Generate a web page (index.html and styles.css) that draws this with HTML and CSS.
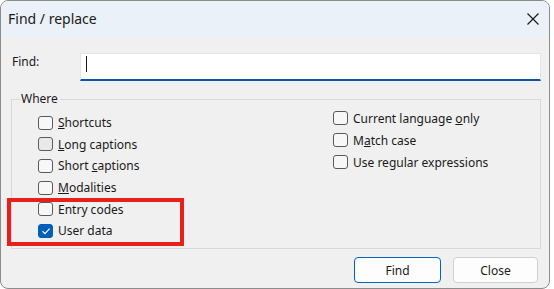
FILE: index.html
```html
<!DOCTYPE html>
<html>
<head>
<meta charset="utf-8">
<title>Find / replace</title>
<link rel="stylesheet" href="styles.css">
</head>
<body>
<div class="dialog">
  <div class="titlebar">
    <span class="title">Find / replace</span>
    <svg class="close" width="14" height="14" viewBox="0 0 14 14"><path d="M1.5 1.5L12.5 12.5M12.5 1.5L1.5 12.5"/></svg>
  </div>
  <div class="find-row">
    <label class="find-label">Find:</label>
    <div class="input"><span class="caret"></span></div>
  </div>
  <fieldset class="where">
    <legend>Where</legend>
    <div class="cols">
      <div class="col col-left">
        <div class="opt"><span class="box"></span><span><u>S</u>hortcuts</span></div>
        <div class="opt"><span class="box hover"></span><span><u>L</u>ong captions</span></div>
        <div class="opt"><span class="box"></span><span>Short <u>c</u>aptions</span></div>
        <div class="opt"><span class="box"></span><span><u>M</u>odalities</span></div>
        <div class="opt"><span class="box"></span><span>Entry codes</span></div>
        <div class="opt"><span class="box checked"><svg width="12" height="12" viewBox="0 0 12 12"><path d="M2.5 6.2L5 8.6L9.6 3.6"/></svg></span><span>User data</span></div>
      </div>
      <div class="col col-right">
        <div class="opt r"><span class="box"></span><span>Current language <u>o</u>nly</span></div>
        <div class="opt r"><span class="box"></span><span>M<u>a</u>tch case</span></div>
        <div class="opt r"><span class="box"></span><span>Use regular expressions</span></div>
      </div>
    </div>
  </fieldset>
  <div class="buttons">
    <button class="btn primary">Find</button>
    <button class="btn">Close</button>
  </div>
  <div class="highlight"></div>
</div>
</body>
</html>
```
FILE: styles.css
```css
html, body {
  margin: 0;
  padding: 0;
  background: #ffffff;
}
body {
  font-family: "Noto Sans", "Open Sans", sans-serif;
  font-size: 12px;
  color: #1a1a1a;
}
.dialog {
  position: relative;
  box-sizing: border-box;
  width: 550px;
  height: 289px;
  border: 1px solid #8c8c8c;
  border-radius: 8px;
  background: #f0f0f0;
  overflow: hidden;
}
.titlebar {
  height: 36px;
  background: #eaf1f8;
  display: flex;
  align-items: center;
  justify-content: space-between;
  padding: 0 9px 0 7px;
}
.title {
  font-size: 14px;
  color: #1a1a1a;
  margin-top: -1px;
}
.close path {
  stroke: #1a1a1a;
  stroke-width: 1.2;
  fill: none;
}
.find-row {
  display: flex;
  margin-top: 16px;
  padding-left: 11px;
}
.find-label {
  width: 68px;
  padding-top: 1px;
  line-height: 16px;
}
.input {
  box-sizing: border-box;
  width: 461px;
  height: 28px;
  background: #ffffff;
  border: 1px solid #e6e6e6;
  border-bottom: 2px solid #0a56a8;
  padding: 2px 0 0 5px;
}
.caret {
  display: block;
  width: 1px;
  height: 16px;
  background: #1a1a1a;
}
.where {
  box-sizing: border-box;
  width: 530px;
  height: 158px;
  margin: 10px 0 0 10px;
  padding: 0;
  border: 1px solid #d8d8d8;
  min-width: 0;
}
.where legend {
  margin-left: 8px;
  padding: 0 2px 0 1px;
  line-height: 16px;
}
.cols {
  display: flex;
}
.col-left {
  width: 295px;
  padding: 5px 0 0 26px;
}
.opt {
  display: flex;
  align-items: center;
  height: 21.6px;
}
.opt.r {
  height: 22px;
}
.box {
  box-sizing: border-box;
  width: 15px;
  height: 14px;
  border: 1px solid #5a5a5a;
  border-radius: 3px;
  background: #f7f7f7;
  margin-right: 5px;
  display: flex;
  align-items: center;
  justify-content: center;
}
.box.hover {
  background: #e9e9e9;
}
.box.checked {
  background: #005fb8;
  border-color: #005fb8;
}
.box.checked path {
  stroke: #ffffff;
  stroke-width: 1.2;
  fill: none;
}
.buttons {
  display: flex;
  justify-content: flex-end;
  gap: 12px;
  margin-top: 8px;
  padding-right: 11px;
}
.btn {
  box-sizing: border-box;
  height: 26px;
  width: 85px;
  font-family: inherit;
  font-size: 12px;
  color: #1a1a1a;
  background: #fdfdfd;
  border: 1px solid #d0d0d0;
  border-radius: 4px;
  padding: 0;
}
.btn.primary {
  width: 87px;
  border-color: #0067c0;
}
.highlight {
  position: absolute;
  left: 6px;
  top: 197px;
  width: 177px;
  height: 48px;
  box-sizing: border-box;
  border: 4px solid #e8201a;
}
```
